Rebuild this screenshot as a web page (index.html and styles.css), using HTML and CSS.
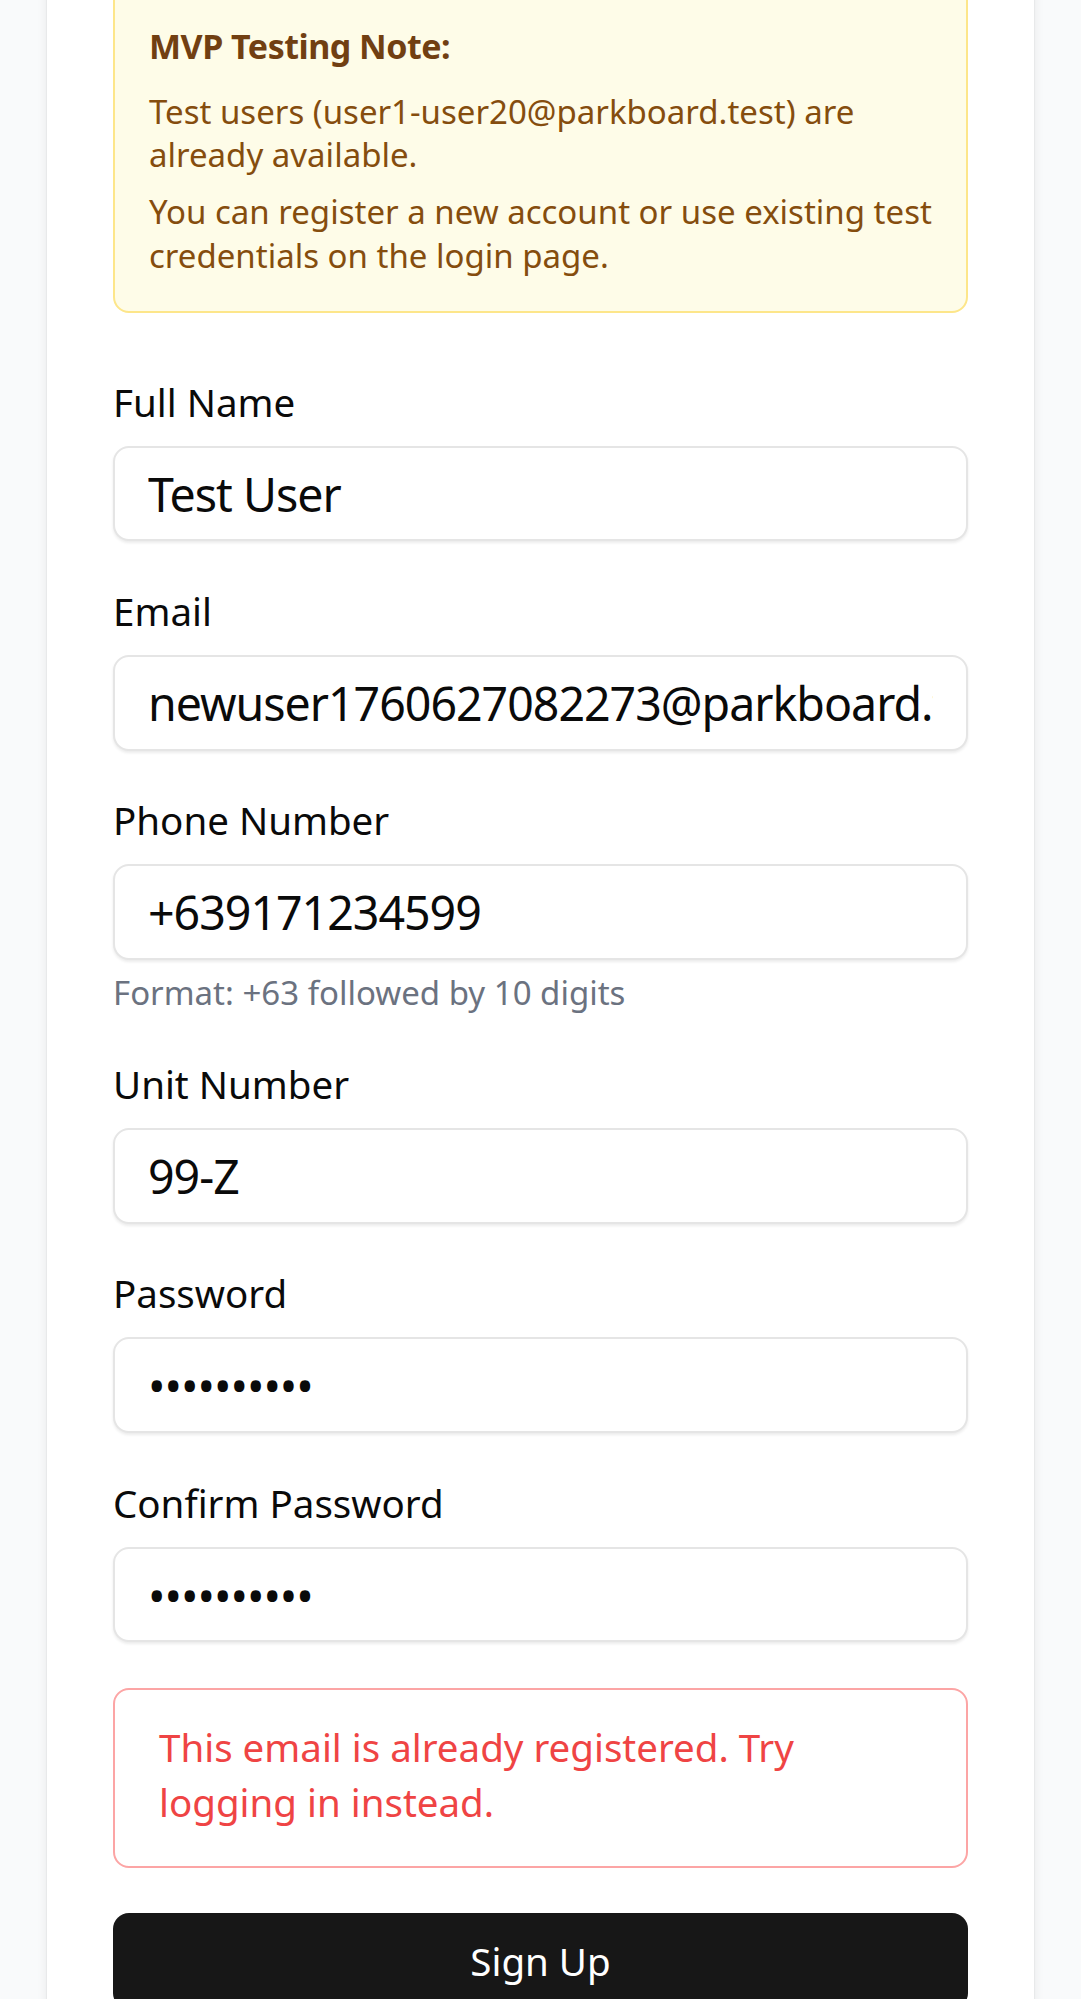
FILE: index.html
```html
<!DOCTYPE html>
<html lang="en">
<head>
<meta charset="utf-8">
<title>Sign Up - ParkBoard</title>
<link rel="stylesheet" href="styles.css">
</head>
<body>
<div class="page">
  <div class="card">
    <div class="note">
      <p class="note-title">MVP Testing Note:</p>
      <p class="note-text">Test users (user1-user20@parkboard.test) are already available.</p>
      <p class="note-text second">You can register a new account or use existing test credentials on the login page.</p>
    </div>
    <form class="form">
      <div class="field">
        <label class="label" for="name">Full Name</label>
        <input class="input" id="name" type="text" value="Test User">
      </div>
      <div class="field">
        <label class="label" for="email">Email</label>
        <input class="input" id="email" type="email" value="newuser1760627082273@parkboard.test">
      </div>
      <div class="field">
        <label class="label" for="phone">Phone Number</label>
        <input class="input" id="phone" type="tel" value="+639171234599">
        <p class="hint">Format: +63 followed by 10 digits</p>
      </div>
      <div class="field">
        <label class="label" for="unit">Unit Number</label>
        <input class="input" id="unit" type="text" value="99-Z">
      </div>
      <div class="field">
        <label class="label" for="pw">Password</label>
        <input class="input" id="pw" type="password" value="password12">
      </div>
      <div class="field">
        <label class="label" for="pw2">Confirm Password</label>
        <input class="input" id="pw2" type="password" value="password12">
      </div>
      <div class="error">This email is already registered. Try logging in instead.</div>
      <button class="button" type="button">Sign Up</button>
    </form>
  </div>
</div>
</body>
</html>
```

FILE: styles.css
```css
* { box-sizing: border-box; }
html, body { margin: 0; padding: 0; }
body {
  background: #f9fafb;
  font-family: "Noto Sans", "Open Sans", sans-serif;
  color: #0a0a0a;
  overflow: hidden;
}
.page {
  padding: 0 47px;
}
.card {
  background: #ffffff;
  margin-top: -81px;
  padding: 64px 66px 120px;
  border-radius: 20px;
  box-shadow: 0 0 0 1px rgba(0,0,0,0.03), 0 4px 12px rgba(0,0,0,0.08);
}
.note {
  background: #fefce8;
  border: 2px solid #fde68a;
  border-radius: 16px;
  padding: 35px 30px 34px 34px;
  color: #854d0e;
}
.note p { margin: 0; }
.note-title {
  font-weight: 700;
  font-size: 34px;
  letter-spacing: -0.5px;
  line-height: 52.5px;
  color: #713f12;
  margin-bottom: 17px !important;
}
.note-text {
  font-size: 33px;
  line-height: 43.5px;
}
.note-text.second { margin-top: 13.8px !important; }
.form {
  margin-top: 62.5px;
  display: flex;
  flex-direction: column;
  gap: 43.8px;
}
.field {
  display: flex;
  flex-direction: column;
}
.label {
  font-size: 38.5px;
  line-height: 52.5px;
  margin-bottom: 17.5px;
  color: #0a0a0a;
}
.input {
  width: 100%;
  height: 95.5px;
  border: 2px solid #e5e5e5;
  border-radius: 16px;
  background: #ffffff;
  box-shadow: 0 2px 3px rgba(0,0,0,0.08);
  padding: 0 33px;
  font-family: "Noto Sans", "Open Sans", sans-serif;
  font-size: 46.5px;
  letter-spacing: -1px;
  color: #0a0a0a;
  outline: none;
}
.hint {
  margin: 12.5px 0 0;
  font-size: 33px;
  line-height: 42px;
  color: #6b7280;
}
.error {
  margin-top: 2.4px;
  border: 2px solid #fca5a5;
  border-radius: 16px;
  background: #ffffff;
  padding: 30px 44px 37px;
  font-size: 38.5px;
  line-height: 54.4px;
  color: #ef4444;
}
.button {
  margin-top: 1px;
  height: 96px;
  border: none;
  border-radius: 16px;
  background: #171717;
  color: #ffffff;
  font-family: "Noto Sans", "Open Sans", sans-serif;
  font-size: 38.5px;
  width: 100%;
}
```
